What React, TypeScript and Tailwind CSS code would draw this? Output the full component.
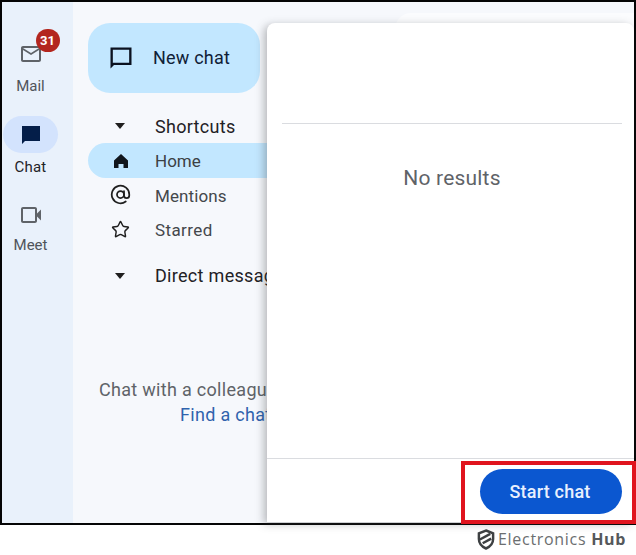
import { AtSign, Star } from 'lucide-react'

const font = "font-['Roboto','Noto_Sans',sans-serif]"

function NavRail() {
  return (
    <div className="flex w-[71px] shrink-0 flex-col items-center bg-[#e9f1fb] pt-[36px] pr-[14px]">
      {/* Mail */}
      <div className="relative flex h-[32px] w-[54px] items-center justify-center">
        <svg width="24" height="24" viewBox="0 0 24 24" className="text-[#5f6368]">
          <path
            fill="currentColor"
            d="M22 6c0-1.100-.9-2-2-2H4c-1.100 0-2 .9-2 2v12c0 1.100.9 2 2 2h16c1.100 0 2-.9 2-2V6zm-2 0-8 5-8-5h16zm0 12H4V8l8 5 8-5v10z"
          />
        </svg>
        <span className="absolute top-[-9px] left-[32px] flex h-[23px] w-[24px] items-center justify-center rounded-full bg-[#b3261e] text-[13px] font-bold text-white">
          31
        </span>
      </div>
      <span className="mt-[6px] text-[15px] leading-[20px] text-[#50545a]">Mail</span>

      {/* Chat */}
      <div className="mt-[20px] flex h-[37px] w-[55px] items-center justify-center rounded-full bg-[#d3e3fd]">
        <svg width="24" height="24" viewBox="0 0 24 24" className="text-[#041e49]">
          <path fill="currentColor" d="M3 3h18v15H6l-3 3V3z" />
        </svg>
      </div>
      <span className="mt-[4px] text-[15px] leading-[20px] tracking-[0.2px] text-[#1f2327]">Chat</span>

      {/* Meet */}
      <div className="mt-[22px] flex h-[32px] w-[54px] items-center justify-center">
        <svg width="24" height="24" viewBox="0 0 24 24" className="text-[#5f6368]">
          <path
            fill="currentColor"
            d="M18 10.500V6c0-1.100-.9-2-2-2H4c-1.100 0-2 .9-2 2v12c0 1.100.9 2 2 2h12c1.100 0 2-.9 2-2v-4.500l4 4v-11l-4 4zM16 18H4V6h12v12z"
          />
        </svg>
      </div>
      <span className="mt-[4px] text-[15px] leading-[20px] text-[#50545a]">Meet</span>
    </div>
  )
}

function CaretRow({ label, className }: { label: string; className?: string }) {
  return (
    <div className={`flex items-center pl-[25px] ${className ?? ''}`}>
      <svg width="14" height="8" viewBox="0 0 14 8" className="shrink-0 text-[#1f1f1f]">
        <path fill="currentColor" d="M2 1h10L7 7z" />
      </svg>
      <span className="ml-[28px] text-[18px] tracking-[0.3px] whitespace-nowrap text-[#1f2125]">{label}</span>
    </div>
  )
}

function Sidebar() {
  return (
    <div className="min-w-0 flex-1 overflow-hidden bg-[#f6f8fc] pt-[21px] pl-[15px]">
      <div className="flex h-[70px] w-[172px] items-center rounded-[22px] bg-[#c2e7ff] pl-[19px]">
        <svg width="28" height="28" viewBox="0 0 24 24" className="text-[#0b1220]">
          <path fill="currentColor" d="M3 3h18v15H6l-3 3V3zm2 2v11.200L5.200 16H19V5H5z" />
        </svg>
        <span className="mb-[2px] ml-[18px] text-[18px] tracking-[0.2px] text-[#0f2036]">New chat</span>
      </div>

      <CaretRow label="Shortcuts" className="mt-[16px] h-[34px]" />

      <div className="flex h-[35px] w-[260px] items-center rounded-l-full bg-[#c2e7ff] pl-[25px]">
        <svg width="16" height="16" viewBox="0 0 16 16" className="shrink-0 text-[#11161c]">
          <path fill="currentColor" d="M8 1 1 7.500V15h4.500v-4h5v4H15V7.500z" />
        </svg>
        <span className="mt-[2px] ml-[26px] text-[17px] text-[#3c4043]">Home</span>
      </div>

      <div className="flex h-[35px] items-center pl-[22px]">
        <AtSign size={21} strokeWidth={2} className="shrink-0 -translate-y-px text-[#1f1f1f]" />
        <span className="mt-[2px] ml-[24px] text-[17px] tracking-[0.1px] text-[#44474b]">Mentions</span>
      </div>
      <div className="flex h-[34px] items-center pl-[23px]">
        <Star size={19} strokeWidth={1.800} className="shrink-0 -translate-y-px text-[#1f1f1f]" />
        <span className="mt-[2px] ml-[25px] text-[17px] tracking-[0.4px] text-[#44474b]">Starred</span>
      </div>

      <CaretRow label="Direct messages" className="mt-[11px] h-[35px]" />

      <div className="mt-[84px] text-[18px] leading-[25px] tracking-[0.3px] whitespace-nowrap">
        <p className="pl-[11px] text-[#5f6368]">Chat with a colleague</p>
        <p className="pl-[92px] text-[#2f63ad]">Find a chat</p>
      </div>
    </div>
  )
}

export default function App() {
  return (
    <div className={`relative h-[555px] w-[636px] overflow-hidden bg-white ${font}`}>
      <div className="flex h-[525px] border-2 border-[#050505]">
        <NavRail />
        <Sidebar />
      </div>

      {/* Panel behind the dialog */}
      <div className="absolute top-[13px] left-[395px] h-[40px] w-[239px] rounded-tl-[16px] bg-[#fbfcfe]" />

      {/* Dialog */}
      <div className="absolute top-[23px] left-[267px] flex h-[499px] w-[367px] flex-col rounded-t-[8px] bg-white shadow-[-3px_2px_8px_rgba(60,64,67,0.35)]">
        <div className="mx-[15px] mt-[100px] h-px w-[340px] bg-[#dadce0]" />
        <div className="mt-[42px] flex-1 pl-[3px] text-center text-[21px] leading-[24px] tracking-[0.2px] text-[#5f6368]">
          No results
        </div>
        <div className="h-px bg-[#dadce0]" />
        <div className="flex h-[63px] items-start justify-end pt-[10px] pr-[12px]">
          <button
            type="button"
            className="h-[45px] w-[142px] rounded-full bg-[#0b57d0] pr-[2px] text-[18px] font-medium tracking-[0.2px] text-[#e8f0fe]"
          >
            Start chat
          </button>
        </div>
      </div>

      {/* Red highlight box */}
      <div className="absolute top-[461px] left-[461px] h-[63px] w-[175px] border-4 border-[#e0141e]" />

      {/* Watermark */}
      <div className="absolute top-[528px] left-[477px] flex items-center">
        <svg width="18" height="21" viewBox="0 0 19 22" className="text-[#3d4042]">
          <path
            fill="none"
            stroke="currentColor"
            strokeWidth="2.600"
            d="M9.500 1.500 17 4.500v6c0 4.500-3 8-7.500 10C5 18.500 2 15 2 10.500v-6z"
          />
          <path fill="none" stroke="currentColor" strokeWidth="2.600" d="M3 11l11-6M6 15l9-5" />
        </svg>
        <span className="ml-[3px] font-['Open_Sans',sans-serif] text-[16px] leading-[22px] tracking-[0.7px] text-[#6b6e70]">
          Electronics <span className="font-bold text-[#55585a]">Hub</span>
        </span>
      </div>
    </div>
  )
}
